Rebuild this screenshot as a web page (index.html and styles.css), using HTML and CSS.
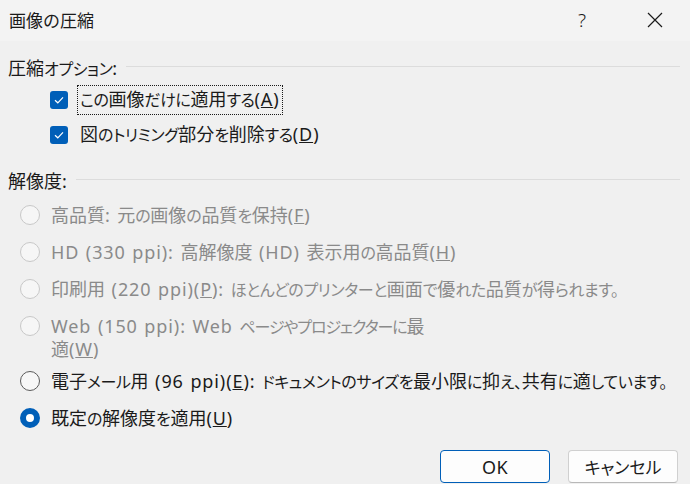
FILE: index.html
```
<!DOCTYPE html>
<html lang="ja">
    <head>
        <meta charset="utf-8">
        <title>画像の圧縮</title>
        <link rel="stylesheet" href="styles.css">
    </head>
    <body>
        <div class="dialog">
            <div class="titlebar">
                <span class="title">画像の圧縮</span>
                <span class="help">?</span>
                <span class="close">
                    <svg width="16" height="16" viewBox="0 0 16 16"><path d="M1 1 L15 15 M15 1 L1 15" stroke="#1a1a1a" stroke-width="1.2" fill="none"/></svg>
                </span>
            </div>

            <div class="content">
                <div class="group-head">
                    <span>圧縮<span class="k">オプション</span><span class="en">:</span></span>
                    <div class="rule"></div>
                </div>

                <div class="check-row">
                    <span class="checkbox"><svg width="18" height="18" viewBox="0 0 18 18"><path d="M5 9.2 L7.8 11.8 L13 6.4" stroke="#fff" stroke-width="1.2" fill="none"/></svg></span>
                    <span class="label focus"><span class="k">この</span>画像<span class="k">だけに</span>適用<span class="k">する</span><span class="en">(<u>A</u>)</span></span>
                </div>
                <div class="check-row">
                    <span class="checkbox"><svg width="18" height="18" viewBox="0 0 18 18"><path d="M5 9.2 L7.8 11.8 L13 6.4" stroke="#fff" stroke-width="1.2" fill="none"/></svg></span>
                    <span class="label">図<span class="k">のトリミング</span>部分<span class="k">を</span>削除<span class="k">する</span><span class="en">(<u>D</u>)</span></span>
                </div>

                <div class="group-head second">
                    <span>解像度<span class="en">:</span></span>
                    <div class="rule"></div>
                </div>

                <div class="radio-row disabled">
                    <span class="radio"></span>
                    <span class="label">高品質<span class="en">: </span>元<span class="k">の</span>画像<span class="k">の</span>品質<span class="k">を</span>保持<span class="en">(<u>F</u>)</span></span>
                </div>
                <div class="radio-row disabled">
                    <span class="radio"></span>
                    <span class="label"><span class="en">HD (330 ppi): </span>高解像度<span class="en"> (HD) </span>表示用<span class="k">の</span>高品質<span class="en">(<u>H</u>)</span></span>
                </div>
                <div class="radio-row disabled">
                    <span class="radio"></span>
                    <span class="label">印刷用<span class="en"> (220 ppi)(<u>P</u>): </span><span class="k">ほとんどのプリンターと</span>画面<span class="k">で</span>優<span class="k">れた</span>品質<span class="k">が</span>得<span class="k">られます。</span></span>
                </div>
                <div class="radio-row disabled wrapped">
                    <span class="radio"></span>
                    <span class="label"><span class="en">Web (150 ppi): Web </span><span class="k kata">ページやプロジェクターに</span>最<br>適<span class="en">(<u>W</u>)</span></span>
                </div>
                <div class="radio-row">
                    <span class="radio"></span>
                    <span class="label">電子<span class="k">メール</span>用<span class="en"> (96 ppi)(<u>E</u>): </span><span class="k">ドキュメントのサイズを</span>最小限<span class="k">に</span>抑<span class="k">え、</span>共有<span class="k">に</span>適<span class="k">しています。</span></span>
                </div>
                <div class="radio-row">
                    <span class="radio checked"></span>
                    <span class="label">既定<span class="k">の</span>解像度<span class="k">を</span>適用<span class="en">(<u>U</u>)</span></span>
                </div>
            </div>

            <div class="footer">
                <button class="btn default"><span class="en">OK</span></button>
                <button class="btn"><span class="k">キャンセル</span></button>
            </div>
        </div>
    </body>
</html>
```

FILE: styles.css
```
html, body {
    margin: 0;
    padding: 0;
    background: #f0f0f0;
}
body {
    font-family: "Noto Sans", "Noto Sans CJK JP", sans-serif;
    font-size: 18px;
    font-feature-settings: "palt";
    color: #1a1a1a;
}
.dialog {
    width: 690px;
    height: 484px;
    overflow: hidden;
}

/* kana are drawn narrower than kanji, latin a little wider */
.k {
    font-size: 16px;
    letter-spacing: -0.4px;
}
.k.kata {
    letter-spacing: -1.1px;
}
.en {
    font-size: 18px;
    letter-spacing: 0.9px;
    word-spacing: 1px;
}

.titlebar {
    height: 41px;
    display: flex;
    align-items: center;
    background: #f3f3f3;
    padding-left: 9px;
    font-feature-settings: normal;
}
.title {
    flex: 1;
    font-size: 17px;
    padding-bottom: 2px;
}
.help {
    width: 18px;
    font-size: 19px;
    font-weight: 300;
    margin-right: 51px;
    padding-bottom: 2px;
}
.close {
    display: flex;
    margin-right: 27px;
    padding-bottom: 2px;
}

.content {
    padding: 14px 10px 0 8px;
}
.group-head {
    display: flex;
    align-items: center;
    height: 24px;
    gap: 8px;
    margin-bottom: 3px;
}
.group-head.second {
    margin-top: 16px;
    margin-bottom: 5px;
}
.rule {
    flex: 1;
    height: 1px;
    background: #dcdcdc;
    margin-top: -1px;
}

.check-row {
    display: flex;
    align-items: center;
    height: 35px;
    padding-left: 42px;
}
.checkbox {
    width: 18px;
    height: 18px;
    border-radius: 3px;
    background: #005fb8;
    display: flex;
    margin-right: 9px;
}
.label {
    padding: 1px 2px;
    border: 1px dotted transparent;
    line-height: 22px;
    white-space: nowrap;
}
.label.focus {
    border-color: #1a1a1a;
    padding: 2px 2px 3px;
}

.radio-row {
    display: flex;
    align-items: flex-start;
    padding: 7px 0 7px 12px;
}
.radio-row.wrapped {
    padding-bottom: 3px;
}
.radio-row .label {
    padding: 0;
    border: none;
}
.radio {
    width: 20px;
    height: 20px;
    box-sizing: border-box;
    border-radius: 50%;
    border: 1px solid #5b5b5b;
    background: #f7f7f7;
    margin: 1px 11px 0 0;
    flex: none;
}
.radio.checked {
    border: 6px solid #005fb8;
    background: #fff;
}
.disabled {
    color: #8a8a8a;
}
.disabled .radio {
    border-color: #c8c8c8;
    background: #f6f6f6;
}

.footer {
    display: flex;
    justify-content: flex-end;
    gap: 18px;
    padding: 13px 12px 0 0;
}
.btn {
    width: 110px;
    height: 33px;
    font-family: inherit;
    font-size: 18px;
    font-feature-settings: "palt";
    color: #1a1a1a;
    background: #fdfdfd;
    border: 1px solid #d0d0d0;
    border-bottom-color: #b8b8b8;
    border-radius: 4px;
}
.btn.default {
    border: 1px solid #005fb8;
}
.btn .en {
    letter-spacing: 0.5px;
}
.btn .k {
    font-size: 17px;
    letter-spacing: 0;
}
```
